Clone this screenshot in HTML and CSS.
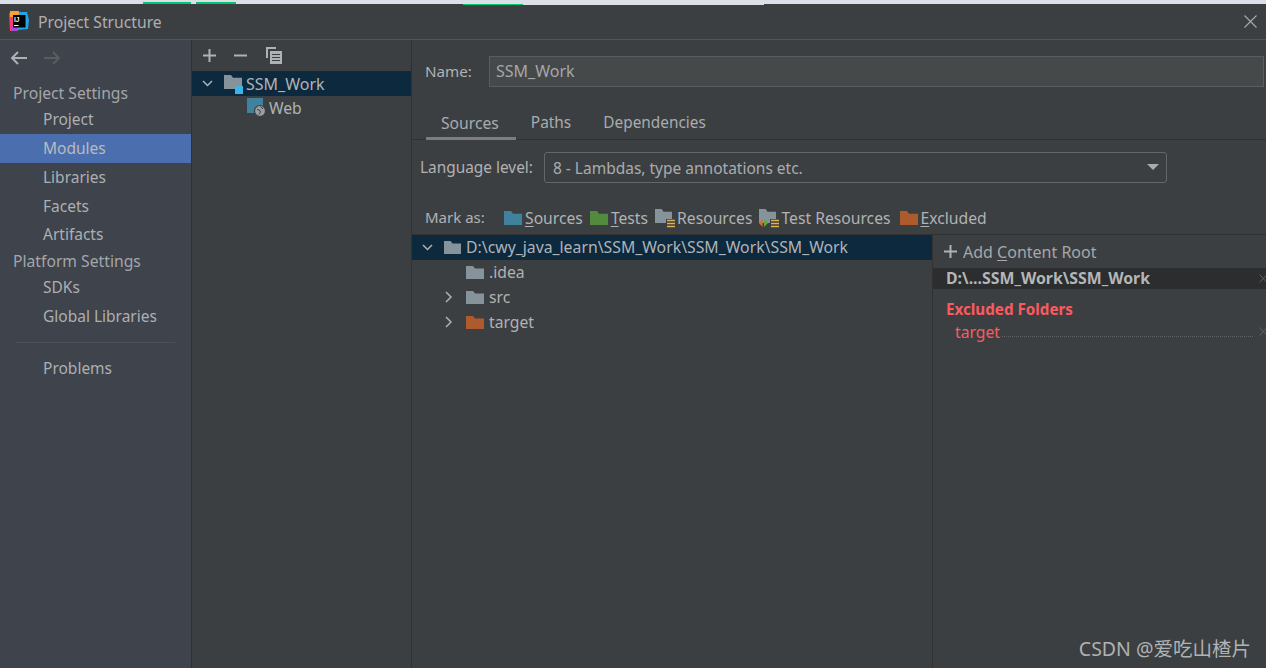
FILE: index.html
```html
<!DOCTYPE html>
<html lang="en">
<head>
<meta charset="utf-8">
<title>Project Structure</title>
<link rel="stylesheet" href="styles.css">
</head>
<body>
<svg class="defs" width="0" height="0" aria-hidden="true">
  <defs>
    <symbol id="folder" viewBox="0 0 18 13" preserveAspectRatio="none"><path d="M0 0H7L9 2.500H18V13H0Z"/></symbol>
  </defs>
</svg>
<div class="window">
  <div class="strip"><span class="g1"></span><span class="g2"></span></div>
  <span class="g3"></span>
  <span class="g4"></span>
  <header class="titlebar">
    <svg class="logo" width="20" height="20" viewBox="0 0 20 20">
      <path fill="#fc3a6f" d="M0 2H7L6 20H1Z"/>
      <path fill="#f9a22c" d="M1 0H10L11 6H1Z"/>
      <path fill="#1fa6e8" d="M10 1H18L20 9 19 18 8 19Z"/>
      <path fill="#a64bd6" d="M2 14H9V20H2Z"/>
      <rect x="4" y="4" width="12.500" height="12.500" fill="#000"/>
      <text x="5" y="10.500" class="logo-t">IJ</text>
      <rect x="5" y="14" width="4.500" height="1" fill="#fff"/>
    </svg>
    <span class="title">Project Structure</span>
    <svg class="close" width="13" height="13" viewBox="0 0 13 13"><path d="M.5.5 12.500 12.500M12.500.5.5 12.500" stroke="#a9abad" stroke-width="1.100" fill="none"/></svg>
  </header>
  <div class="body">
    <nav class="side">
      <div class="nav-arrows">
        <svg width="18" height="14" viewBox="0 0 18 14"><path d="M17 7H2M8 1 2 7l6 6" fill="none" stroke="#afb1b3" stroke-width="2"/></svg>
        <svg width="18" height="14" viewBox="0 0 18 14"><path d="M1 7H16M10 1l6 6-6 6" fill="none" stroke="#5a5d60" stroke-width="2"/></svg>
      </div>
      <div class="group">Project Settings</div>
      <div class="item">Project</div>
      <div class="item active">Modules</div>
      <div class="item">Libraries</div>
      <div class="item tight">Facets</div>
      <div class="item">Artifacts</div>
      <div class="group g-2">Platform Settings</div>
      <div class="item">SDKs</div>
      <div class="item">Global Libraries</div>
      <div class="sep"></div>
      <div class="item">Problems</div>
    </nav>
    <section class="mods">
      <div class="toolbar">
        <svg width="13" height="13" viewBox="0 0 13 13"><path d="M6.500 0V13M0 6.500H13" stroke="#afb1b3" stroke-width="2"/></svg>
        <svg width="13" height="13" viewBox="0 0 13 13"><path d="M0 6.500H13" stroke="#afb1b3" stroke-width="2"/></svg>
        <svg class="copy" width="16" height="17" viewBox="0 0 16 17"><path d="M0 0H10V2H2V11H0Z" fill="#afb1b3"/><path d="M4 4H16V17H4Z" fill="#afb1b3"/><path d="M6 7.500H14M6 10.500H14M6 13.500H14" stroke="#3c3f41" stroke-width="1"/></svg>
      </div>
      <div class="mrow sel">
        <svg class="chev" width="11" height="7" viewBox="0 0 11 7"><path d="M1 1l4.500 4.500L10 1" fill="none" stroke="#afb1b3" stroke-width="1.500"/></svg>
        <span class="micon">
          <svg class="f-grey" width="18" height="14"><use href="#folder" width="18" height="14"/></svg>
          <span class="msq"></span>
        </span>
        <span>SSM_Work</span>
      </div>
      <div class="mrow web">
        <span class="wicon">
          <svg width="20" height="19" viewBox="0 0 20 19"><rect x="0" y="0" width="16" height="15" fill="#40819e"/><circle cx="13" cy="13" r="5.500" fill="#9da0a3" stroke="#3c3f41" stroke-width="1.200"/><path d="M10 11.500l2.500 .5 1 2-1.500 2.500M13.500 8.500l2.500 2.500" stroke="#3c3f41" stroke-width="1" fill="none"/></svg>
        </span>
        <span>Web</span>
      </div>
    </section>
    <main class="detail">
      <div class="name-row">
        <label class="name-label">Name:</label>
        <div class="name-input">SSM_Work</div>
      </div>
      <div class="tabs">
        <span class="tab on">Sources</span>
        <span class="tab">Paths</span>
        <span class="tab">Dependencies</span>
      </div>
      <div class="lang-row">
        <label class="lang-label">Language level:</label>
        <div class="combo">
          <span class="combo-text">8 - Lambdas, type annotations etc.</span>
          <svg width="12" height="6" viewBox="0 0 12 6"><path d="M0 0H12L6 6Z" fill="#a9abad"/></svg>
        </div>
      </div>
      <div class="mark-row">
        <span class="mark-label">Mark as:</span>
        <span class="mark">
          <svg class="f-blue" width="18" height="14"><use href="#folder" width="18" height="14"/></svg><span><u>S</u>ources</span>
        </span>
        <span class="mark">
          <svg class="f-green" width="18" height="14"><use href="#folder" width="18" height="14"/></svg><span><u>T</u>ests</span>
        </span>
        <span class="mark">
          <span class="res">
            <svg class="f-grey" width="17" height="14"><use href="#folder" width="17" height="14"/></svg>
            <svg class="stack" width="9" height="9" viewBox="0 0 9 9"><rect width="9" height="9" fill="#3c3f41"/><path d="M1 1.500H9M1 4.500H9M1 7.500H9" stroke="#e0b04a" stroke-width="1.600"/></svg>
          </span><span>Resources</span>
        </span>
        <span class="mark wide">
          <span class="res">
            <svg class="f-grey" width="17" height="14"><use href="#folder" width="17" height="14"/></svg>
            <svg class="stack" width="9" height="9" viewBox="0 0 9 9"><rect width="9" height="9" fill="#3c3f41"/><path d="M1 1.500H9M1 4.500H9M1 7.500H9" stroke="#e0b04a" stroke-width="1.600"/></svg>
            <svg class="tri" width="9" height="10" viewBox="0 0 9 10"><path d="M3.500 1V9L0 5Z" fill="#e8672a"/><path d="M5 1V9L9 5Z" fill="#5fa83a"/></svg>
          </span><span>Test Resources</span>
        </span>
        <span class="mark">
          <svg class="f-orange" width="18" height="14"><use href="#folder" width="18" height="14"/></svg><span><u>E</u>xcluded</span>
        </span>
      </div>
      <div class="split">
        <div class="tree">
          <div class="trow sel root">
            <svg class="chev" width="11" height="7" viewBox="0 0 11 7"><path d="M1 1l4.500 4.500L10 1" fill="none" stroke="#afb1b3" stroke-width="1.500"/></svg>
            <svg class="f-grey" width="17" height="13"><use href="#folder" width="17" height="13"/></svg>
            <span>D:\cwy_java_learn\SSM_Work\SSM_Work\SSM_Work</span>
          </div>
          <div class="trow child">
            <span class="arrow-slot"></span>
            <svg class="f-grey" width="18" height="13"><use href="#folder" width="18" height="13"/></svg>
            <span>.idea</span>
          </div>
          <div class="trow child">
            <svg class="arrow-slot" width="8" height="12" viewBox="0 0 8 12"><path d="M1 1l5 5-5 5" fill="none" stroke="#afb1b3" stroke-width="1.500"/></svg>
            <svg class="f-grey" width="18" height="13"><use href="#folder" width="18" height="13"/></svg>
            <span>src</span>
          </div>
          <div class="trow child">
            <svg class="arrow-slot" width="8" height="12" viewBox="0 0 8 12"><path d="M1 1l5 5-5 5" fill="none" stroke="#afb1b3" stroke-width="1.500"/></svg>
            <svg class="f-orange" width="18" height="13"><use href="#folder" width="18" height="13"/></svg>
            <span>target</span>
          </div>
        </div>
        <aside class="roots">
          <div class="add-root">
            <svg width="13" height="13" viewBox="0 0 13 13"><path d="M6.500 0V13M0 6.500H13" stroke="#afb1b3" stroke-width="2"/></svg>
            <span>Add <u>C</u>ontent Root</span>
          </div>
          <div class="root-path">
            <span>D:\...SSM_Work\SSM_Work</span>
            <svg class="x" width="8" height="9" viewBox="0 0 8 9"><path d="M.5.500 8 8.500M8 .500.500 8.500" stroke="#5f6265" stroke-width="1"/></svg>
          </div>
          <div class="ex-head">Excluded Folders</div>
          <div class="ex-row">
            <span>target</span>
            <span class="dots"></span>
            <svg class="x" width="8" height="9" viewBox="0 0 8 9"><path d="M.5.500 8 8.500M8 .500.500 8.500" stroke="#5f6265" stroke-width="1"/></svg>
          </div>
        </aside>
      </div>
    </main>
  </div>
  <div class="watermark">CSDN @爱吃山楂片</div>
</div>
</body>
</html>
```
FILE: styles.css
```css
* { box-sizing: border-box; }
html, body { margin: 0; height: 100%; overflow: hidden; }
body { background: #3c3f41; color: #b0b2b4; font: 15.7px/20px "Noto Sans", "Open Sans", "Noto Sans CJK SC", sans-serif; }
.defs { position: absolute; }
svg { flex: none; display: block; }
u { text-underline-offset: 2px; text-decoration-thickness: 1px; }

.window { position: relative; width: 1266px; height: 668px; display: flex; flex-direction: column; overflow: hidden; }

.strip { height: 4px; flex: none; background: #dcdee8; display: flex; align-items: flex-end; padding-left: 143px; }
.g1, .g2 { height: 2px; background: #00c76f; }
.g1 { width: 48px; margin-right: 5px; }
.g2 { width: 40px; }
.g3 { position: absolute; left: 463px; top: 4px; width: 60px; height: 1px; background: #00c76f; }
.g4 { position: absolute; left: 523px; top: 4px; width: 241px; height: 1px; background: #dcdee8; }

.titlebar { height: 36px; flex: none; display: flex; align-items: center; padding: 0 9px; border-bottom: 1px solid #515355; }
.logo { margin-right: 9px; margin-top: -1px; }
.logo-t { font: bold 6.500px "Liberation Sans", sans-serif; fill: #fff; }
.title { color: #adafb1; flex: 1; }

.body { flex: 1; display: flex; min-height: 0; }

.side { width: 192px; flex: none; background: #3e434c; border-right: 1px solid #2f3133; display: flex; flex-direction: column; }
.nav-arrows { height: 39px; flex: none; display: flex; gap: 15px; align-items: center; padding: 0 0 3px 10px; }
.group { height: 26px; flex: none; line-height: 28px; padding-left: 13px; color: #a4a6a9; }
.group.g-2 { height: 24px; line-height: 25px; }
.item { height: 29px; flex: none; line-height: 29px; padding-left: 43px; color: #adafb2; font-size: 15.500px; }
.item.tight { height: 28px; }
.item.active { background: #4b6eaf; color: #b9bbbe; }
.sep { height: 1px; margin: 11px 16px; background: #4c5058; flex: none; }

.mods { width: 220px; flex: none; border-right: 1px solid #2f3133; }
.toolbar { height: 30px; display: flex; align-items: center; gap: 18px; padding-left: 11px; }
.copy { margin-left: 1px; }
.mrow { display: flex; align-items: center; }
.mrow.sel { background: #0d293e; height: 25px; padding-left: 10px; margin-top: 1px; color: #b0b4b8; font-size: 16px; }
.micon { position: relative; width: 22px; height: 18px; margin-left: 11px; display: block; }
.micon .f-grey { position: absolute; left: 0; top: 0; }
.msq { position: absolute; left: 11px; bottom: -1px; width: 8px; height: 8px; background: #3fb3e6; }
.web { padding-left: 55px; height: 25px; padding-bottom: 2px; }
.wicon { margin-right: 2px; }

.detail { flex: 1; min-width: 0; display: flex; flex-direction: column; }
.name-row { height: 68px; flex: none; display: flex; align-items: flex-start; padding-top: 16px; padding-right: 2px; }
.name-label { width: 77px; padding-left: 13px; line-height: 30px; flex: none; font-size: 15.200px; }
.name-input { flex: 1; height: 31px; background: #45494a; border: 1px solid #5a5d5f; line-height: 29px; padding-left: 6px; color: #a5a7a9; font-size: 16px; }

.tabs { height: 32px; flex: none; display: flex; padding-left: 14px; border-bottom: 1px solid #323232; font-size: 15.400px; }
.tab { padding: 0 15px 0 15px; line-height: 30px; color: #a9acaf; }
.tab.on { border-bottom: 3px solid #7a7d82; height: 32px; padding-right: 17px; font-size: 15.700px; }
.tab:nth-child(3) { padding-left: 17px; }

.lang-row { height: 44px; flex: none; display: flex; align-items: center; padding: 10px 99px 0 8px; gap: 11px; font-size: 15.400px; }
.lang-label { padding-top: 1px; }
.combo { flex: 1; height: 31px; border: 1px solid #646769; border-radius: 3px; background: #3c3f41; display: flex; align-items: center; justify-content: space-between; padding: 0 7px 0 8px; color: #a9acaf; }
.combo-text { font-size: 15.500px; padding-top: 1px; }

.mark-row { height: 51px; flex: none; display: flex; align-items: flex-end; padding: 0 0 6px 13px; border-bottom: 1px solid #323232; }
.mark-label { width: 79px; flex: none; line-height: 20px; padding-bottom: 1px; font-size: 15px; }
.mark { display: flex; align-items: center; gap: 3px; margin-right: 7px; height: 20px; }
.mark.wide { margin-right: 9px; }
.res { position: relative; width: 19px; height: 18px; display: block; }
.stack { position: absolute; right: -1px; bottom: -1px; }
.tri { position: absolute; left: 0; bottom: -1px; }
.f-grey { fill: #87939a; }
.f-blue { fill: #40819e; }
.f-green { fill: #528b3e; }
.f-orange { fill: #ad5a2c; }

.split { flex: 1; display: flex; min-height: 0; }
.tree { width: 520px; flex: none; }
.trow { height: 25px; display: flex; align-items: center; padding-bottom: 1px; }
.trow.sel { background: #0d293e; padding-left: 10px; color: #b0b4b8; font-size: 15.800px; }
.root .f-grey { margin-left: 11px; margin-right: 5px; }
.child { padding-left: 33px; }
.arrow-slot { width: 8px; height: 12px; display: block; }
.child .f-grey, .child .f-orange { margin-left: 13px; margin-right: 5px; }

.roots { flex: 1; border-left: 1px solid #323232; min-width: 0; }
.add-root { height: 33px; display: flex; align-items: center; gap: 6px; padding-left: 11px; color: #a5a7a9; font-size: 16px; }
.root-path { height: 21px; background: #2b2d2e; color: #b4b6b8; font-weight: 700; display: flex; justify-content: space-between; align-items: center; padding: 0 0 1px 13px; font-size: 15.850px; }
.x { margin-right: -1px; }
.ex-head { color: #fb5a60; font-weight: 700; font-size: 15.200px; padding-left: 13px; height: 23px; margin-top: 9px; line-height: 22px; }
.ex-row { display: flex; align-items: center; padding-left: 22px; color: #fb5a60; height: 22px; padding-bottom: 1px; }
.dots { flex: 1; border-bottom: 1px dotted #5f6265; height: 1px; margin: 10px 6px 0 2px; }

.watermark { position: absolute; right: 15px; top: 637px; font-size: 19.500px; line-height: 24px; color: #b0b2b3; }
```
